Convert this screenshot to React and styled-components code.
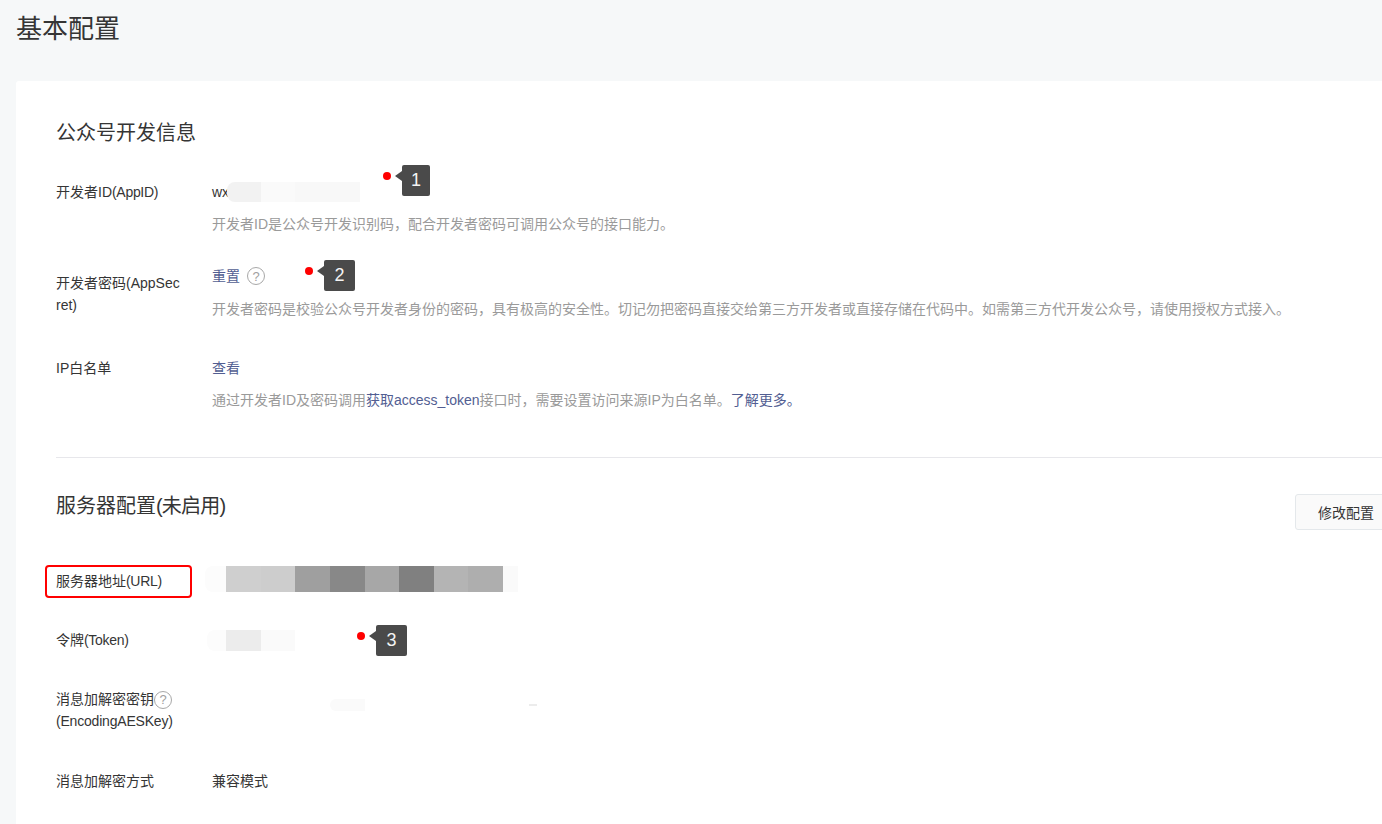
import React from 'react';
import styled, { createGlobalStyle } from 'styled-components';

const GlobalStyle = createGlobalStyle`
    html, body {
        margin: 0;
        padding: 0;
        height: 100%;
        overflow: hidden;
        background: #f6f8f9;
    }
    body {
        font-family: "Liberation Sans", "Noto Sans CJK SC", sans-serif;
        font-size: 14px;
        color: #353535;
    }
`;

const Page = styled.div`
    width: 1382px;
    height: 824px;
    overflow: hidden;
`;

const PageTitle = styled.h2`
    margin: 0;
    padding: 11px 0 0 16px;
    height: 81px;
    box-sizing: border-box;
    font-size: 26px;
    font-weight: 400;
    line-height: 36px;
    color: #353535;
`;

const Card = styled.div`
    margin-left: 16px;
    width: 1421px;
    box-sizing: border-box;
    padding: 38px 40px 60px;
    background: #fff;
    border-radius: 3px;
`;

const SectionHead = styled.div`
    display: flex;
    justify-content: space-between;
    align-items: flex-start;
    height: 28px;
    margin-bottom: ${(p) => p.$gap}px;
`;

const SectionTitle = styled.h3`
    margin: 0;
    font-size: 20px;
    font-weight: 400;
    line-height: 28px;
    color: #353535;
`;

// bracketed words run a little narrower in the reference
const Tight = styled.span`
    letter-spacing: ${(p) => p.$spacing || -0.3}px;
`;

const Button = styled.button`
    width: 102px;
    height: 36px;
    margin-top: 2px;
    padding: 0;
    border: 1px solid #e4e8eb;
    border-radius: 3px;
    background: #fafafa;
    font: inherit;
    color: #353535;
`;

const Divider = styled.div`
    height: 1px;
    background: #e7e7eb;
    margin: 46px 0 34px;
`;

const Row = styled.div`
    display: grid;
    grid-template-columns: 156px 1fr;
    margin-top: ${(p) => p.$top || 0}px;
`;

const Label = styled.div`
    position: relative;
    padding-top: ${(p) => p.$offset || 0}px;
    line-height: 22px;
    color: #353535;
    ${(p) => p.$highlight && `
        &::before {
            content: '';
            position: absolute;
            left: -11px;
            top: -5px;
            width: 147px;
            height: 33px;
            box-sizing: border-box;
            border: 2px solid #f00;
            border-radius: 4px;
        }
    `}
`;

const ValueLine = styled.div`
    position: relative;
    display: flex;
    align-items: center;
    height: 22px;
    line-height: 22px;
`;

const Desc = styled.p`
    margin: ${(p) => p.$top}px 0 0;
    line-height: 22px;
    color: #9a9a9a;
    white-space: nowrap;
`;

const Link = styled.a`
    color: #525e92;
    text-decoration: none;
`;

const Help = styled.span`
    display: inline-flex;
    align-items: center;
    justify-content: center;
    flex: none;
    width: 18px;
    height: 18px;
    box-sizing: border-box;
    margin: -4px 0 -4px ${(p) => p.$left || 0}px;
    border: 1px solid #a8a8a8;
    border-radius: 50%;
    color: #a0a0a0;
    font-size: 13px;
    line-height: 1;
`;

const Mosaic = styled.div`
    display: flex;
    height: ${(p) => p.$height}px;
    margin-left: ${(p) => p.$left}px;
    margin-top: ${(p) => p.$top || 0}px;
    flex: none;
`;

const Cell = styled.div`
    width: ${(p) => p.$width}px;
    background: ${(p) => p.$color};
    &:first-child {
        border-radius: 8px 0 0 8px;
    }
`;

const Speck = styled.span`
    width: 8px;
    height: 2px;
    margin: 12px 0 0 164px;
    background: #ececec;
    flex: none;
`;

const Marker = styled.div`
    position: absolute;
    left: ${(p) => p.$left}px;
    top: ${(p) => p.$top}px;
    display: flex;
    align-items: flex-start;
    gap: 11px;
`;

const Dot = styled.span`
    width: 8px;
    height: 8px;
    margin-top: 7px;
    border-radius: 50%;
    background: #f00;
`;

const Badge = styled.span`
    position: relative;
    width: ${(p) => p.$width}px;
    height: 31px;
    border-radius: 2px;
    background: #4a4a4a;
    color: #f4f4f4;
    font-size: 18px;
    line-height: 31px;
    text-align: center;

    &::before {
        content: '';
        position: absolute;
        left: -7px;
        top: 6px;
        border-style: solid;
        border-width: 5px 7px 5px 0;
        border-color: transparent #4a4a4a transparent transparent;
    }
`;

const urlCells = ['#fcfcfc', '#cfcfcf', '#cdcdcd', '#9f9f9f', '#888888', '#a7a7a7', '#808080', '#b4b4b4', '#aeaeae', '#fafafa'];
const urlWidths = [21, 35, 34, 35, 35, 34, 35, 34, 35, 15];

const Note = ({ left, top, width, n }) => (
    <Marker $left={left} $top={top}>
        <Dot />
        <Badge $width={width}>{n}</Badge>
    </Marker>
);

export default function App() {
    return (
        <Page>
            <GlobalStyle />
            <PageTitle>基本配置</PageTitle>
            <Card>
                <SectionHead $gap={34}>
                    <SectionTitle>公众号开发信息</SectionTitle>
                </SectionHead>

                <Row>
                    <Label>开发者ID<Tight>(AppID)</Tight></Label>
                    <div>
                        <ValueLine>
                            wx
                            <Mosaic $height={20} $left={-2}>
                                <Cell $width={34} $color="#f2f2f2" />
                                <Cell $width={34} $color="#fafafa" />
                                <Cell $width={65} $color="#f8f8f8" />
                            </Mosaic>
                            <Note left={171} top={-16} width={28} n="1" />
                        </ValueLine>
                        <Desc $top={10}>开发者ID是公众号开发识别码，配合开发者密码可调用公众号的接口能力。</Desc>
                    </div>
                </Row>

                <Row $top={30}>
                    <Label $offset={7}>开发者密码(AppSec<br />ret)</Label>
                    <div>
                        <ValueLine>
                            <Link>重置</Link>
                            <Help $left={7}>?</Help>
                            <Note left={93} top={-5} width={31} n="2" />
                        </ValueLine>
                        <Desc $top={11}>开发者密码是校验公众号开发者身份的密码，具有极高的安全性。切记勿把密码直接交给第三方开发者或直接存储在代码中。如需第三方代开发公众号，请使用授权方式接入。</Desc>
                    </div>
                </Row>

                <Row $top={37}>
                    <Label>IP白名单</Label>
                    <div>
                        <ValueLine>
                            <Link>查看</Link>
                        </ValueLine>
                        <Desc $top={10}>
                            通过开发者ID及密码调用<Link>获取access_token</Link>接口时，需要设置访问来源IP为白名单。<Link>了解更多。</Link>
                        </Desc>
                    </div>
                </Row>

                <Divider />

                <SectionHead $gap={50}>
                    <SectionTitle>服务器配置<Tight $spacing={-0.8}>(未启用)</Tight></SectionTitle>
                    <Button>修改配置</Button>
                </SectionHead>

                <Row>
                    <Label $highlight>服务器地址<Tight>(URL)</Tight></Label>
                    <ValueLine>
                        <Mosaic $height={26} $left={-7} $top={-4}>
                            {urlCells.map((color, i) => (
                                <Cell key={i} $width={urlWidths[i]} $color={color} />
                            ))}
                        </Mosaic>
                    </ValueLine>
                </Row>

                <Row $top={37}>
                    <Label>令牌<Tight>(Token)</Tight></Label>
                    <ValueLine>
                        <Mosaic $height={21} $left={-5}>
                            <Cell $width={19} $color="#fcfcfc" />
                            <Cell $width={35} $color="#ececec" />
                            <Cell $width={34} $color="#fafafa" />
                        </Mosaic>
                        <Note left={145} top={-4} width={31} n="3" />
                    </ValueLine>
                </Row>

                <Row $top={37}>
                    <Label>消息加解密密钥<Help>?</Help><br /><Tight $spacing={-0.2}>(EncodingAESKey)</Tight></Label>
                    <ValueLine>
                        <Mosaic $height={12} $left={118} $top={12}>
                            <Cell $width={35} $color="#fafafa" />
                        </Mosaic>
                        <Speck />
                    </ValueLine>
                </Row>

                <Row $top={38}>
                    <Label>消息加解密方式</Label>
                    <ValueLine>兼容模式</ValueLine>
                </Row>
            </Card>
        </Page>
    );
}
